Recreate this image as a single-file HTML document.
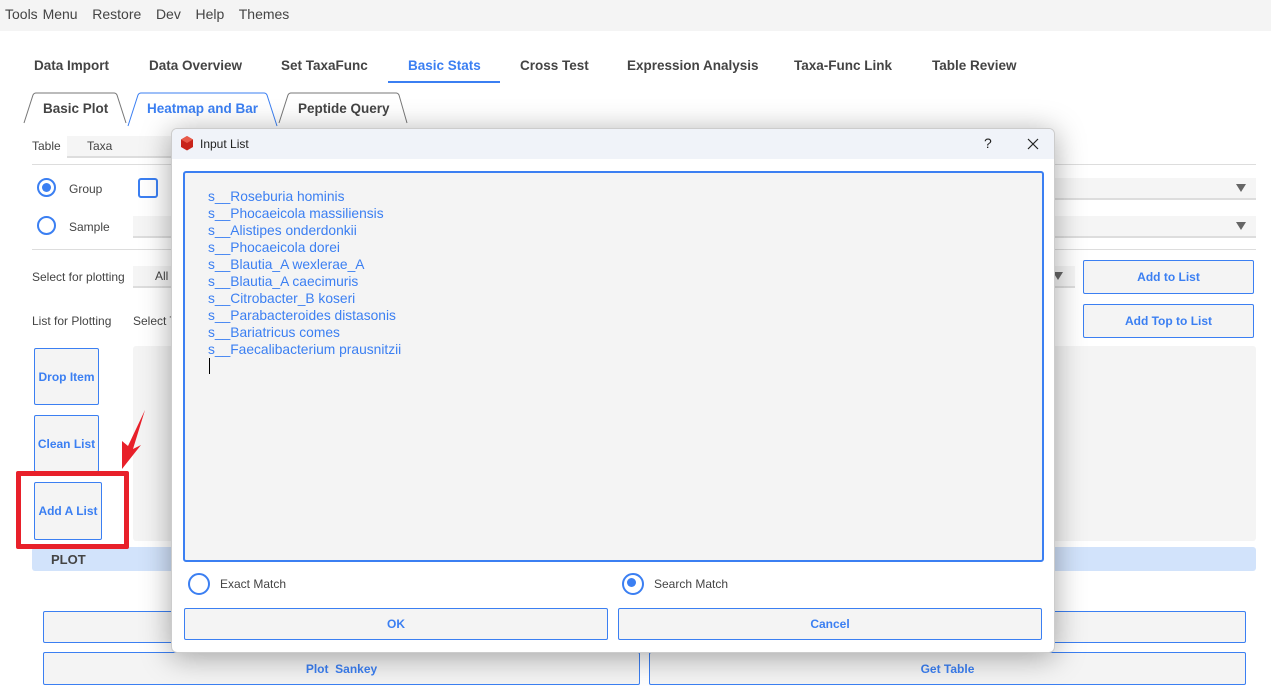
<!DOCTYPE html>
<html><head><style>
body{margin:0;width:1271px;height:694px;background:#fff;font-family:"Liberation Sans",sans-serif;position:relative;overflow:hidden;color:#444}
.a{position:absolute}
.b{font-weight:bold}
.btn{position:absolute;border:1px solid #3b7ff2;border-radius:2px;background:#f4f4f4;color:#3b7ff2;font-weight:bold;font-size:12px;display:flex;align-items:center;justify-content:center}
.rad{position:absolute;width:19px;height:19px;border:2px solid #3b7ff2;border-radius:50%;box-sizing:border-box;background:#fff}
.rad.on::after{content:"";position:absolute;left:3px;top:3px;width:9px;height:9px;border-radius:50%;background:#3b7ff2}
.combo{position:absolute;background:#f5f5f5;border-bottom:2px solid #ddd}
.tri{position:absolute;right:10px;top:6px;width:0;height:0;border-left:5px solid transparent;border-right:5px solid transparent;border-top:8px solid #666}
.ln{position:absolute;height:1px;background:#ddd}
.t{font-size:13.5px}
</style></head><body>
<div class="a" style="left:0;top:0;width:1271px;height:31px;background:#f4f4f4"></div>
<div class="a" style="left:5px;top:6px;font-size:14px;color:#444;word-spacing:1px">Tools Menu&nbsp;&nbsp; Restore&nbsp;&nbsp; Dev&nbsp;&nbsp; Help&nbsp;&nbsp; Themes</div>
<div class="a b t" style="left:34px;top:58px">Data Import</div>
<div class="a b t" style="left:149px;top:58px">Data Overview</div>
<div class="a b t" style="left:281px;top:58px">Set TaxaFunc</div>
<div class="a b t" style="left:408px;top:58px;color:#3b7ff2">Basic Stats</div>
<div class="a" style="left:388px;top:81px;width:112px;height:2px;background:#3b7ff2"></div>
<div class="a b t" style="left:520px;top:58px">Cross Test</div>
<div class="a b t" style="left:627px;top:58px">Expression Analysis</div>
<div class="a b t" style="left:794px;top:58px">Taxa-Func Link</div>
<div class="a b t" style="left:932px;top:58px">Table Review</div>
<svg class="a" style="left:0;top:90px" width="420" height="40"><path d="M24 33 L33 5 Q34 3 36 3 L114 3 Q116 3 117 5 L126 33" fill="none" stroke="#777"/><path d="M128 36 L138 5 Q139 3 141 3 L264 3 Q266 3 267 5 L277 36" fill="none" stroke="#3b7ff2"/><path d="M279 33 L288 5 Q289 3 291 3 L396 3 Q398 3 399 5 L407 33" fill="none" stroke="#777"/></svg>
<div class="a b t" style="left:43px;top:101px">Basic Plot</div>
<div class="a b t" style="left:147px;top:101px;color:#3b7ff2">Heatmap and Bar</div>
<div class="a b t" style="left:298px;top:101px">Peptide Query</div>
<div class="a" style="left:32px;top:139px;font-size:12px">Table</div>
<div class="combo" style="left:67px;top:136px;width:110px;height:20px"></div>
<div class="a" style="left:87px;top:139px;font-size:12px">Taxa</div>
<div class="ln" style="left:32px;top:164px;width:1224px"></div>
<div class="rad on" style="left:37px;top:178px"></div><div class="a" style="left:69px;top:182px;font-size:12px">Group</div>
<div class="a" style="left:138px;top:178px;width:20px;height:20px;border:2px solid #3b7ff2;border-radius:3px;box-sizing:border-box"></div>
<div class="combo" style="left:1050px;top:178px;width:206px;height:20px"><div class="tri"></div></div>
<div class="rad" style="left:37px;top:216px"></div><div class="a" style="left:69px;top:220px;font-size:12px">Sample</div>
<div class="combo" style="left:133px;top:216px;width:1123px;height:20px"><div class="tri"></div></div>
<div class="ln" style="left:32px;top:249px;width:1224px"></div>
<div class="a" style="left:32px;top:270px;font-size:12px">Select for plotting</div>
<div class="combo" style="left:133px;top:266px;width:942px;height:20px"><div class="tri" style="right:12px"></div></div>
<div class="a" style="left:155px;top:269px;font-size:12px">All</div>
<div class="btn" style="left:1083px;top:260px;width:169px;height:32px">Add to List</div>
<div class="btn" style="left:1083px;top:304px;width:169px;height:32px">Add Top to List</div>
<div class="a" style="left:32px;top:314px;font-size:12px">List for Plotting</div>
<div class="a" style="left:133px;top:314px;font-size:12px">Select T</div>
<div class="a" style="left:133px;top:346px;width:1123px;height:195px;background:#f4f4f4;border-radius:3px"></div>
<div class="btn" style="left:34px;top:348px;width:63px;height:55px">Drop Item</div>
<div class="btn" style="left:34px;top:415px;width:63px;height:55px">Clean List</div>
<div class="btn" style="left:34px;top:482px;width:66px;height:56px">Add A List</div>
<div class="a" style="left:32px;top:547px;width:1224px;height:24px;background:#d2e3fb;border-radius:3px"></div>
<div class="a b" style="left:51px;top:552px;font-size:13px">PLOT</div>
<div class="a" style="left:16px;top:471px;width:113px;height:78px;border:5px solid #e8202a;border-radius:2px;box-sizing:border-box"></div>
<svg class="a" style="left:115px;top:405px" width="35" height="65"><polygon points="30,5 18,44 26,40 7,64 7,36 13,41" fill="#e8202a"/></svg>
<div class="btn" style="left:43px;top:611px;width:595px;height:30px"></div>
<div class="btn" style="left:649px;top:611px;width:595px;height:30px"></div>
<div class="btn" style="left:43px;top:652px;width:595px;height:31px">Plot&nbsp; Sankey</div>
<div class="btn" style="left:649px;top:652px;width:595px;height:31px">Get Table</div>

<div class="a" style="left:171px;top:128px;width:884px;height:525px;background:#fff;border:1px solid #ccc;box-sizing:border-box;border-radius:6px;box-shadow:0 4px 30px rgba(0,0,0,0.35);overflow:hidden">
<div class="a" style="left:0;top:0;width:884px;height:30px;background:#f0f3f9"></div>
<svg class="a" style="left:8px;top:7px" width="14" height="15"><polygon points="7,0 13,3.5 13,11 7,14.5 1,11 1,3.5" fill="#c8241b"/><polygon points="7,0 13,3.5 7,7 1,3.5" fill="#e85a4a"/></svg>
<div class="a" style="left:28px;top:8px;font-size:12px;color:#222">Input List</div>
<div class="a" style="left:812px;top:6px;font-size:14px;color:#222">?</div>
<svg class="a" style="left:855px;top:9px" width="12" height="12"><path d="M1 1L11 11M11 1L1 11" stroke="#222" stroke-width="1.2"/></svg>
<div class="a" style="left:11px;top:42px;width:861px;height:391px;background:#f4f4f4;border:2px solid #3b7ff2;box-sizing:border-box;border-radius:3px"></div>
<div class="a" style="left:36px;top:59px;font-size:13.8px;line-height:17px;color:#3b7ff2">s__Roseburia hominis<br>s__Phocaeicola massiliensis<br>s__Alistipes onderdonkii<br>s__Phocaeicola dorei<br>s__Blautia_A wexlerae_A<br>s__Blautia_A caecimuris<br>s__Citrobacter_B koseri<br>s__Parabacteroides distasonis<br>s__Bariatricus comes<br>s__Faecalibacterium prausnitzii</div>
<div class="a" style="left:37px;top:229px;width:1px;height:16px;background:#000"></div>
<div class="rad" style="left:16px;top:444px;width:22px;height:22px"></div><div class="a" style="left:48px;top:448px;font-size:12px">Exact Match</div>
<div class="rad on" style="left:450px;top:444px;width:22px;height:22px"></div><div class="a" style="left:482px;top:448px;font-size:12px">Search Match</div>
<div class="btn" style="left:12px;top:479px;width:422px;height:30px">OK</div>
<div class="btn" style="left:446px;top:479px;width:422px;height:30px">Cancel</div>
</div>
</body></html>
